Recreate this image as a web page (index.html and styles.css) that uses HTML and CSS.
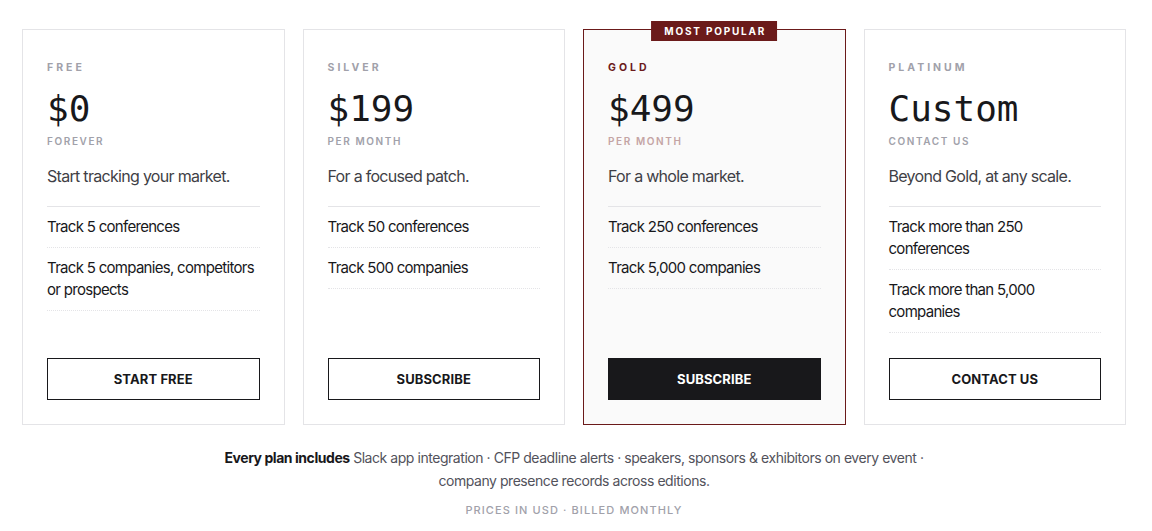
FILE: index.html
```html
<!DOCTYPE html>
<html lang="en">
<head>
<meta charset="utf-8">
<title>Pricing</title>
<link rel="stylesheet" href="styles.css">
</head>
<body>
<main class="pricing">
  <div class="plans">
    <section class="plan">
      <div class="tier">FREE</div>
      <div class="price">$0</div>
      <div class="period">FOREVER</div>
      <p class="tagline">Start tracking your market.</p>
      <ul class="features">
        <li>Track 5 conferences</li>
        <li>Track 5 companies, competitors or prospects</li>
      </ul>
      <a class="btn">START FREE</a>
    </section>
    <section class="plan">
      <div class="tier">SILVER</div>
      <div class="price">$199</div>
      <div class="period">PER MONTH</div>
      <p class="tagline">For a focused patch.</p>
      <ul class="features">
        <li>Track 50 conferences</li>
        <li>Track 500 companies</li>
      </ul>
      <a class="btn">SUBSCRIBE</a>
    </section>
    <section class="plan plan-featured">
      <div class="badge">MOST POPULAR</div>
      <div class="tier">GOLD</div>
      <div class="price">$499</div>
      <div class="period">PER MONTH</div>
      <p class="tagline">For a whole market.</p>
      <ul class="features">
        <li>Track 250 conferences</li>
        <li>Track 5,000 companies</li>
      </ul>
      <a class="btn btn-dark">SUBSCRIBE</a>
    </section>
    <section class="plan">
      <div class="tier">PLATINUM</div>
      <div class="price">Custom</div>
      <div class="period">CONTACT US</div>
      <p class="tagline">Beyond Gold, at any scale.</p>
      <ul class="features">
        <li>Track more than 250 conferences</li>
        <li>Track more than 5,000 companies</li>
      </ul>
      <a class="btn">CONTACT US</a>
    </section>
  </div>
  <p class="includes"><strong>Every plan includes</strong> Slack app integration · CFP deadline alerts · speakers, sponsors &amp; exhibitors on every event · company presence records across editions.</p>
  <p class="note">PRICES IN USD · BILLED MONTHLY</p>
</main>
</body>
</html>
```
FILE: styles.css
```css
* { box-sizing: border-box; }
html, body { margin: 0; padding: 0; background: #ffffff; }
body {
  font-family: Inter, "Liberation Sans", sans-serif;
  color: #18181b;
}
.pricing {
  width: 1104px;
  margin-left: 22px;
  padding-top: 29px;
}
.plans {
  display: grid;
  grid-template-columns: repeat(4, 1fr);
  gap: 18px;
}
.plan {
  position: relative;
  display: flex;
  flex-direction: column;
  border: 1px solid #e4e4e7;
  padding: 30px 24px 24px;
  height: 396px;
  background: #fff;
}
.plan-featured {
  background: #fafafa;
  border-color: #6b1a1a;
}
.badge {
  position: absolute;
  top: -9px;
  left: 50%;
  transform: translateX(-50%);
  background: #6b1a1a;
  color: #fff;
  font-size: 10px;
  font-weight: 700;
  letter-spacing: 1.8px;
  line-height: 20px;
  padding: 0 11px 0 13px;
  white-space: nowrap;
}
.tier {
  font-size: 10.5px;
  font-weight: 700;
  letter-spacing: 3px;
  color: #a1a1aa;
  line-height: 16px;
}
.plan-featured .tier { color: #6b1a1a; }
.price {
  font-family: "DejaVu Sans Mono", "Liberation Mono", monospace;
  font-size: 36px;
  line-height: 42px;
  margin-top: 12px;
  color: #18181b;
}
.period {
  font-size: 10px;
  font-weight: 600;
  letter-spacing: 1.6px;
  color: #a1a1aa;
  line-height: 14px;
  margin-top: 4px;
}
.plan-featured .period { color: #c4a4a4; }
.tagline {
  margin: 16px 0 0;
  font-size: 16px;
  line-height: 24px;
  letter-spacing: -0.7px;
  color: #3f3f46;
  padding-bottom: 18px;
  border-bottom: 1px solid #e4e4e7;
}
.features {
  list-style: none;
  margin: 0;
  padding: 0;
  flex: 1;
}
.features li {
  font-size: 15px;
  line-height: 22px;
  letter-spacing: -0.7px;
  padding: 9px 0 9px;
  border-bottom: 1px dotted #e4e4e7;
  color: #18181b;
}
.btn {
  display: block;
  height: 42px;
  line-height: 40px;
  border: 1px solid #18181b;
  text-align: center;
  font-size: 13px;
  font-weight: 700;
  letter-spacing: 0.1px;
  color: #18181b;
  background: #fff;
}
.btn-dark {
  background: #18181b;
  color: #fff;
}
.includes {
  margin: 21px auto 0;
  width: 730px;
  text-align: center;
  font-size: 14px;
  line-height: 23px;
  letter-spacing: -0.45px;
  color: #52525b;
}
.includes strong { color: #18181b; font-weight: 650; }
.note {
  margin: 11px 0 0;
  text-align: center;
  font-size: 11px;
  font-weight: 500;
  letter-spacing: 1.1px;
  color: #a1a1aa;
}
```
